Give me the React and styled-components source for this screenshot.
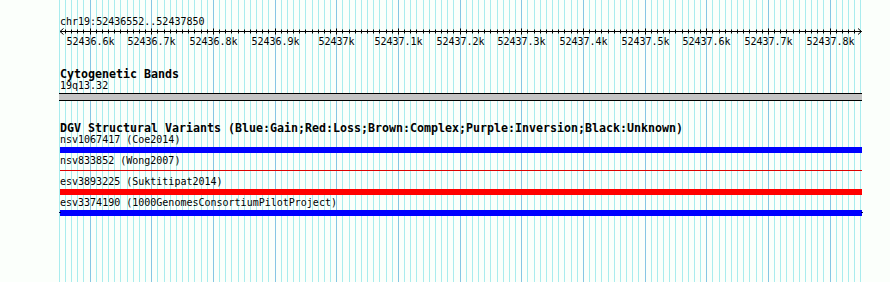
import React from "react";
import styled, { createGlobalStyle } from "styled-components";

const START = 52436552;
const END = 52437850;
const LEFT = 59;
const WIDTH = 803;
const SCALE = 0.61667;

// genome position -> page pixel
const toX = (bp) => 60.5 + (bp - START) * SCALE;

const GlobalStyle = createGlobalStyle`
  html, body {
    margin: 0;
    padding: 0;
    background: #fbfffb;
  }
`;

const Page = styled.div`
  position: relative;
  width: 890px;
  height: 282px;
  overflow: hidden;
  background: #fbfffb;
  font-family: "DejaVu Sans Mono", "Liberation Mono", monospace;
  color: #000;
`;

const GridLayer = styled.svg`
  position: absolute;
  left: 0;
  top: 0;
  pointer-events: none;
`;

const Tracks = styled.div`
  position: relative;
  display: flex;
  flex-direction: column;
  width: ${WIDTH}px;
  margin-left: ${LEFT}px;
  padding-top: 15px;
`;

const Label = styled.div`
  font-size: 10px;
  line-height: ${(p) => p.$lh || 12}px;
  height: ${(p) => p.$lh || 12}px;
  padding-left: 1px;
  white-space: nowrap;
`;

const TrackTitle = styled.div`
  font-size: 11.63px;
  font-weight: bold;
  line-height: 12px;
  height: 12px;
  padding-left: 1px;
  margin-top: ${(p) => p.$gap}px;
  white-space: nowrap;
`;

const RulerSvg = styled.svg`
  display: block;
`;

const BandBar = styled.div`
  margin-top: 1px;
  height: 6px;
  background: #c4c4c4;
  border-top: 1px solid #000;
  border-bottom: 1px solid #000;
`;

const Feature = styled.div`
  display: flex;
  flex-direction: column;
  height: 21px;
`;

const Bar = styled.div`
  position: relative;
  margin-top: ${(p) => (p.$thin ? 3 : 1)}px;
  margin-left: 1px;
  height: ${(p) => (p.$thin ? 1 : 6)}px;
  background: ${(p) => p.$color};

  &::before,
  &::after {
    content: "";
    display: ${(p) => (p.$capped ? "block" : "none")};
    position: absolute;
    top: 2px;
    width: 2px;
    height: 1px;
    background: #00004a;
  }
  &::before {
    left: -1px;
  }
  &::after {
    right: -1px;
  }
`;

function Grid() {
  const lines = [];
  for (let bp = 52436550; bp <= END; bp += 10) {
    const major = bp % 100 === 0;
    lines.push(
      <rect
        key={bp}
        x={Math.floor(toX(bp))}
        y={0}
        width={1}
        height={282}
        fill={major ? "#86c6e4" : "#a9ecee"}
      />
    );
  }
  return (
    <GridLayer width={890} height={282}>
      {lines}
    </GridLayer>
  );
}

function Ruler() {
  const axis = 3.5;
  const ticks = [];
  const labels = [];
  for (let bp = 52436560; bp < END; bp += 10) {
    const x = Math.floor(toX(bp)) - LEFT + 0.5;
    const major = bp % 100 === 0;
    ticks.push(
      <line key={bp} x1={x} x2={x} y1={axis - (major ? 3 : 2)} y2={axis + (major ? 3 : 2)} stroke="#000" strokeWidth={1} />
    );
    if (major) {
      labels.push(
        <text key={"l" + bp} x={x} y={17} textAnchor="middle" fontSize="10" fontFamily='"DejaVu Sans Mono", monospace' fill="#000">
          {(bp / 1000).toFixed(1).replace(/\.0$/, "")}k
        </text>
      );
    }
  }
  const right = WIDTH - 0.5;
  return (
    <RulerSvg width={WIDTH} height={22}>
      <line x1={1} x2={right} y1={axis} y2={axis} stroke="#000" strokeWidth={1} />
      <polyline points={`4.5,0.5 1,${axis} 4.5,6.5`} fill="none" stroke="#000" strokeWidth={1} />
      <polyline points={`${right - 3.5},0.5 ${right},${axis} ${right - 3.5},6.5`} fill="none" stroke="#000" strokeWidth={1} />
      {ticks}
      {labels}
    </RulerSvg>
  );
}

const variants = [
  { name: "nsv1067417 (Coe2014)", color: "#0000ff" },
  { name: "nsv833852 (Wong2007)", color: "#dd0000", thin: true },
  { name: "esv3893225 (Suktitipat2014)", color: "#ff0000" },
  { name: "esv3374190 (1000GenomesConsortiumPilotProject)", color: "#0000ff", capped: true },
];

export default function App() {
  return (
    <>
      <GlobalStyle />
      <Page>
        <Grid />
        <Tracks>
          <Label $lh={13}>chr19:{START}..{END}</Label>
          <Ruler />
          <TrackTitle $gap={18}>Cytogenetic Bands</TrackTitle>
          <Label>19q13.32</Label>
          <BandBar />
          <TrackTitle $gap={21}>DGV Structural Variants (Blue:Gain;Red:Loss;Brown:Complex;Purple:Inversion;Black:Unknown)</TrackTitle>
          {variants.map((v) => (
            <Feature key={v.name}>
              <Label>{v.name}</Label>
              <Bar $color={v.color} $thin={v.thin} $capped={v.capped} />
            </Feature>
          ))}
        </Tracks>
      </Page>
    </>
  );
}
